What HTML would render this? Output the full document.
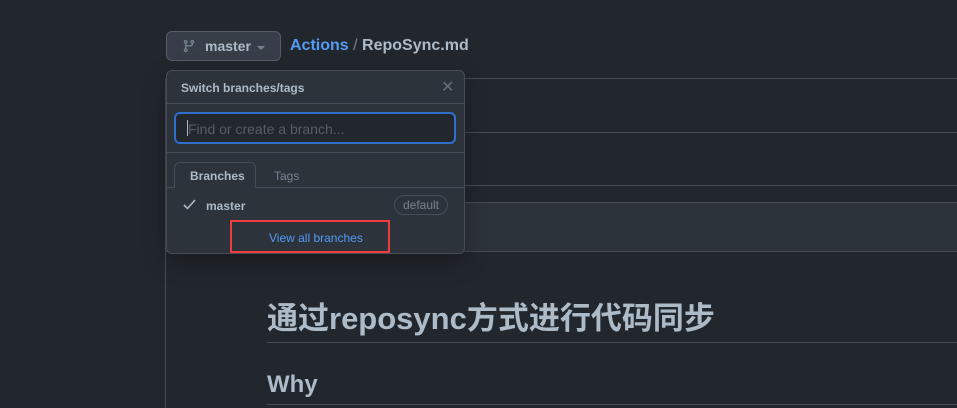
<!DOCTYPE html>
<html><head><meta charset="utf-8"><style>
body{margin:0;width:957px;height:405px;background:#22272e;overflow:hidden;position:relative;font-family:"Liberation Sans","Noto Sans CJK SC",sans-serif;color:#adbac7}
.a{position:absolute}
.hl{position:absolute;height:1px;background:#444c56}
</style></head><body>
<div class="hl" style="left:166px;right:0;top:78px"></div>
<div class="hl" style="left:166px;right:0;top:132px"></div>
<div class="hl" style="left:166px;right:0;top:185px"></div>
<div class="a" style="left:166px;right:0;top:202px;height:48px;background:#2d333b;border-top:1px solid #444c56;border-bottom:1px solid #444c56"></div>
<div class="a" style="left:165px;top:78px;width:1px;height:330px;background:#444c56"></div>

<div class="a" style="left:166px;top:31px;width:115px;height:30px;background:#373e47;border:1px solid #545d68;border-radius:6px;box-sizing:border-box"></div>
<svg class="a" style="left:182px;top:38px" width="14" height="16" viewBox="0 0 16 16"><path fill="#768390" d="M9.5 3.25a2.25 2.25 0 1 1 3 2.122V6A2.5 2.5 0 0 1 10 8.5H6a1 1 0 0 0-1 1v1.128a2.251 2.251 0 1 1-1.5 0V5.372a2.25 2.25 0 1 1 1.5 0v1.836A2.493 2.493 0 0 1 6 7h4a1 1 0 0 0 1-1v-.628A2.25 2.25 0 0 1 9.5 3.25Zm-6 0a.75.75 0 1 0 1.5 0 .75.75 0 0 0-1.5 0Zm8.25-.75a.75.75 0 1 0 0 1.5.75.75 0 0 0 0-1.5ZM4.25 12a.75.75 0 1 0 0 1.5.75.75 0 0 0 0-1.5Z"/></svg>
<div class="a" style="left:205px;top:38px;font-size:14px;font-weight:bold;color:#adbac7">master</div>
<div class="a" style="left:257px;top:46px;border-left:4px solid transparent;border-right:4px solid transparent;border-top:4px solid #768390"></div>
<div class="a" style="left:290px;top:37px;font-size:16px;font-weight:bold"><span style="color:#539bf5">Actions</span> <span style="color:#768390;font-weight:normal">/</span> <span style="color:#adbac7">RepoSync.md</span></div>

<div class="a" style="left:166px;top:70px;width:299px;height:184px;background:#2d333b;border:1px solid #444c56;border-radius:6px;box-sizing:border-box;box-shadow:0 8px 24px rgba(0,0,0,.3)"></div>
<div class="a" style="left:181px;top:81px;font-size:12px;font-weight:bold;color:#adbac7">Switch branches/tags</div>
<div class="a" style="left:441px;top:77px;font-size:16px;color:#636e7b">✕</div>
<div class="hl" style="left:167px;width:297px;top:103px"></div>
<div class="a" style="left:174px;top:112px;width:282px;height:32px;box-sizing:border-box;border:2px solid #316dca;border-radius:6px;background:#22272e"></div>
<div class="a" style="left:187px;top:120px;width:1px;height:16px;background:#adbac7"></div>
<div class="a" style="left:188px;top:121px;font-size:14px;color:#545d68">Find or create a branch...</div>
<div class="hl" style="left:167px;width:297px;top:152px"></div>
<div class="a" style="left:167px;top:153px;width:297px;height:100px;background:#2d333b;border-radius:0 0 6px 6px"></div>
<div class="hl" style="left:167px;width:297px;top:187px"></div>
<div class="a" style="left:174px;top:162px;width:82px;height:26px;box-sizing:border-box;border:1px solid #444c56;border-bottom:none;border-radius:6px 6px 0 0;background:#2d333b"></div>
<div class="a" style="left:190px;top:169px;font-size:12px;font-weight:bold;color:#adbac7">Branches</div>
<div class="a" style="left:274px;top:169px;font-size:12px;color:#768390">Tags</div>
<svg class="a" style="left:183px;top:199px" width="13" height="11" viewBox="0 0 13 11"><path d="M1 6l3.5 3.5L12 1" fill="none" stroke="#adbac7" stroke-width="1.6"/></svg>
<div class="a" style="left:206px;top:199px;font-size:12px;font-weight:bold;color:#adbac7">master</div>
<div class="a" style="left:394px;top:195px;width:54px;height:20px;box-sizing:border-box;border:1px solid #444c56;border-radius:10px;font-size:12px;color:#768390;text-align:center;line-height:18px">default</div>
<div class="a" style="left:269px;top:231px;font-size:12px;color:#539bf5">View all branches</div>
<div class="a" style="left:230px;top:220px;width:160px;height:33px;box-sizing:border-box;border:2px solid #f03c3c"></div>

<div class="a" style="left:267px;top:293px;font-size:31px;font-weight:bold;color:#adbac7;white-space:nowrap">通过reposync方式进行代码同步</div>
<div class="hl" style="left:267px;right:0;top:342px"></div>
<div class="a" style="left:267px;top:371px;font-size:24px;font-weight:bold;color:#adbac7">Why</div>
<div class="hl" style="left:267px;right:0;top:404px"></div>
</body></html>
